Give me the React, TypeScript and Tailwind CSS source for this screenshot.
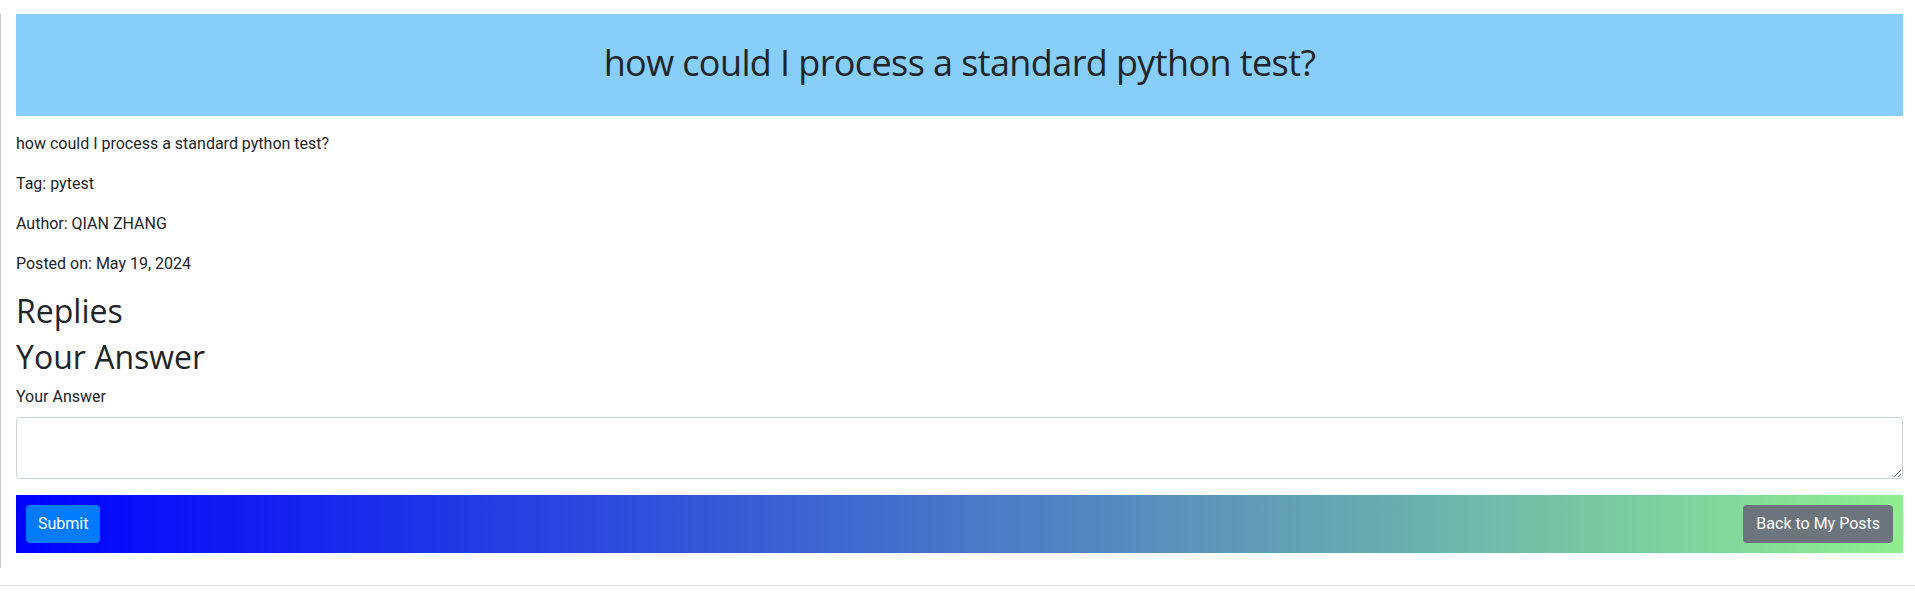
import React from 'react';

const App: React.FC = () => {
  return (
    <div className="min-h-screen w-full bg-white font-['Roboto',sans-serif] text-[16px] leading-6 text-[#212529]">
      {/* Post container */}
      <div className="mt-[14px] border-l border-[#c8c8c8] pl-[15px] pr-[12px] pb-[15px]">
        {/* Title banner */}
        <div className="h-[102px] flex items-center justify-center bg-[#87cefa] pb-[4px]">
          <h1 className="font-['Open_Sans',sans-serif] font-medium text-[36px] leading-[48px] tracking-[-0.6px] text-[#212529]">
            how could I process a standard python test?
          </h1>
        </div>

        {/* Post details */}
        <div className="mt-[16px]">
          <p className="mb-4">how could I process a standard python test?</p>
          <p className="mb-4">Tag: pytest</p>
          <p className="mb-4">Author: QIAN ZHANG</p>
          <p className="mb-4">Posted on: May 19, 2024</p>
        </div>

        <h2 className="font-['Open_Sans',sans-serif] font-medium text-[32px] leading-[1.2] mb-2">Replies</h2>
        <h2 className="font-['Open_Sans',sans-serif] font-medium text-[32px] leading-[1.2] mb-2">Your Answer</h2>

        {/* Answer form */}
        <form onSubmit={(e) => e.preventDefault()}>
          <div className="mb-4">
            <label className="block mb-2">Your Answer</label>
            <textarea
              rows={2}
              className="block w-full h-[62px] rounded border border-[#ced4da] px-3 py-1.5 outline-none"
            />
          </div>

          <div className="flex items-center justify-between p-[10px] bg-[linear-gradient(to_right,#0000ff,#90ee90)]">
            <button
              type="submit"
              className="h-[38px] px-3 rounded bg-[#007bff] text-white text-[16px] leading-6"
            >
              Submit
            </button>
            <button
              type="button"
              className="h-[38px] px-[13px] rounded bg-[#6c757d] text-white text-[16px] leading-6"
            >
              Back to My Posts
            </button>
          </div>
        </form>
      </div>

      {/* Footer rule */}
      <div className="mt-[17px] border-t border-[#dee2e6]" />
    </div>
  );
};

export default App;
